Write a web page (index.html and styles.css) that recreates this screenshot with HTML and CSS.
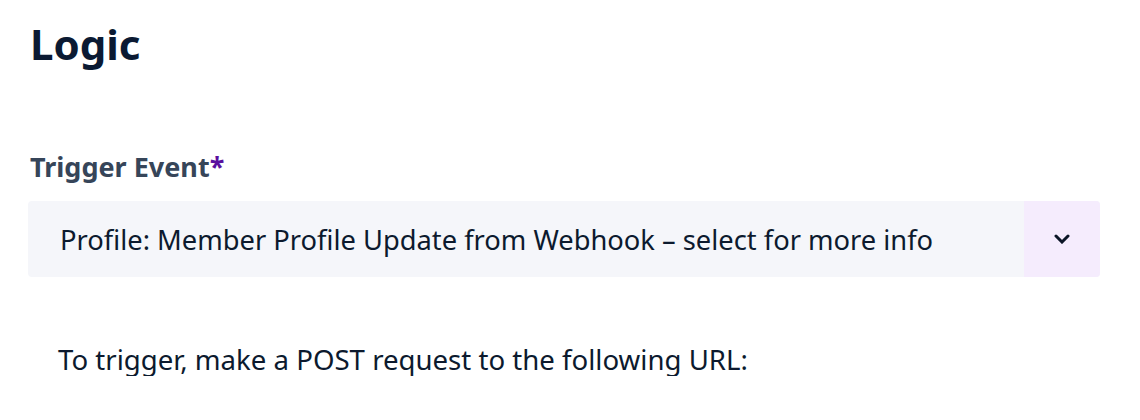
FILE: index.html
```html
<!DOCTYPE html>
<html>
<head>
<meta charset="utf-8">
<link rel="stylesheet" href="styles.css">
</head>
<body>
<main class="page">
  <h1 class="title">Logic</h1>
  <section class="field">
    <label class="label">Trigger Event<span class="req">*</span></label>
    <div class="select">
      <div class="select-value">Profile: Member Profile Update from Webhook – select for more info</div>
      <div class="select-toggle">
        <svg class="chevron" width="16" height="10" viewBox="0 0 16 10"><path d="M2 2l6 6 6-6" fill="none" stroke="#0b1526" stroke-width="3" stroke-linecap="round" stroke-linejoin="miter"/></svg>
      </div>
    </div>
  </section>
  <p class="hint">To trigger, make a POST request to the following URL:</p>
</main>
</body>
</html>
```

FILE: styles.css
```css
html, body {
  margin: 0;
  padding: 0;
  background: #ffffff;
}
body {
  font-family: "Noto Sans", "Open Sans", sans-serif;
  color: #0c1a2e;
}
.page {
  padding: 16px 40px 0 28px;
}
.title {
  margin: 0 0 0 2px;
  font-size: 42px;
  font-weight: 700;
  color: #0b1a33;
  line-height: 56px;
}
.field {
  margin-top: 78px;
}
.label {
  display: block;
  margin-left: 2px;
  font-size: 27px;
  font-weight: 700;
  color: #364559;
  line-height: 34px;
}
.req {
  color: #5a0f9e;
}
.select {
  margin-top: 17px;
  display: flex;
  height: 76px;
  width: 1072px;
  background: #f5f6fa;
  border-radius: 4px;
  overflow: hidden;
}
.select-value {
  flex: 1;
  display: flex;
  align-items: center;
  padding-left: 32px;
  font-size: 27.3px;
  color: #0c1a2e;
}
.select-toggle {
  width: 76px;
  display: flex;
  align-items: center;
  justify-content: center;
  background: #f5ecfd;
}
.chevron {
  display: block;
}
.hint {
  margin: 65px 0 0 30px;
  font-size: 27.6px;
  color: #0c1a2e;
  line-height: 34px;
}
```
